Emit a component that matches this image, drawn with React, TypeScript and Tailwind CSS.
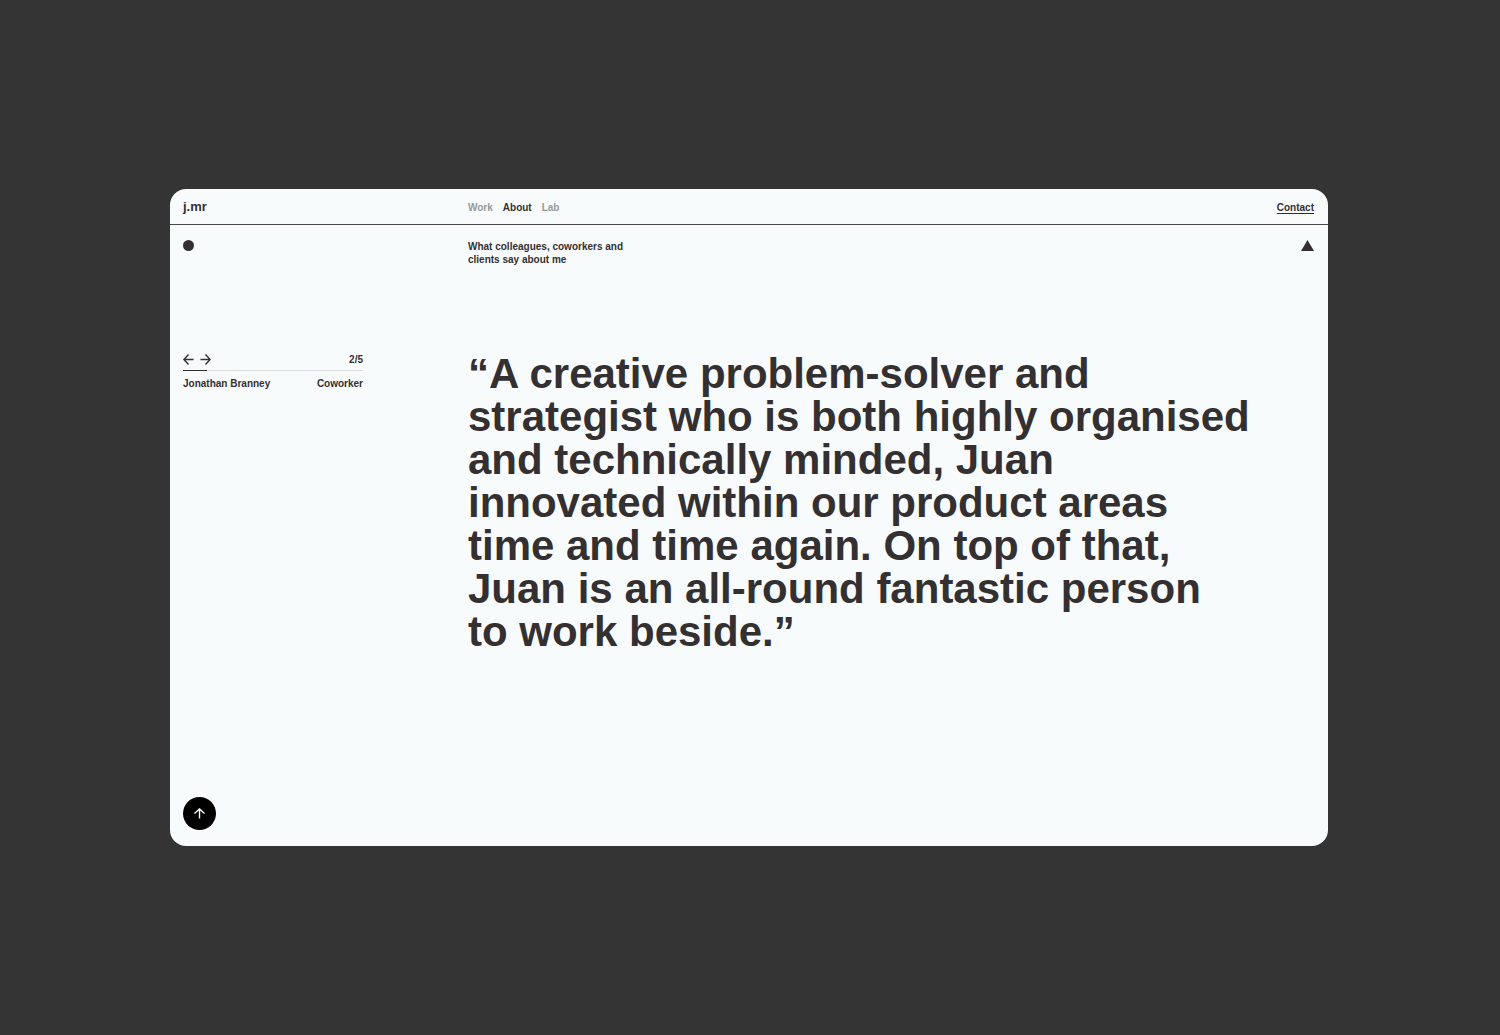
const quote = [
  '“A creative problem-solver and',
  'strategist who is both highly organised',
  'and technically minded, Juan',
  'innovated within our product areas',
  'time and time again. On top of that,',
  'Juan is an all-round fantastic person',
  'to work beside.”',
];

function Arrow({ className }: { className: string }) {
  return (
    <svg viewBox="0 0 12 12" className={className} fill="none" stroke="currentColor" strokeWidth="1.5" aria-hidden="true">
      <path d="M0.5 6H11M6 0.5L11 6L6 11.5" />
    </svg>
  );
}

export default function App() {
  return (
    <div className="flex min-h-screen items-center justify-center bg-[#343434] font-['Liberation_Sans',Arial,sans-serif] text-[10px] leading-[13px] font-bold text-[#343031]">
      <div className="mr-[2px] flex aspect-[1158/657] w-[77.2%] flex-col rounded-2xl bg-[#f8fbfc]">
        <header className="grid h-9 grid-cols-4 items-center gap-2 border-b border-[#4a4748] px-[13px]">
          <a href="#home" className="text-[13px] leading-4">j.mr</a>
          <nav className="flex gap-[10px] pt-px">
            <a href="#work" className="text-[#969899]">Work</a>
            <a href="#about" aria-current="page">About</a>
            <a href="#lab" className="text-[#969899]">Lab</a>
          </nav>
          <a href="#contact" className="col-span-2 mr-px justify-self-end pt-px underline underline-offset-2">Contact</a>
        </header>

        <main className="flex grow flex-col px-[13px] pt-[15px] pb-4">
          <section className="grid grid-cols-4 gap-2">
            <span className="size-[11px] rounded-full bg-[#343031]" />
            <h2 className="w-44">
              What colleagues, coworkers and
              <br />
              clients say about me
            </h2>
            <svg viewBox="0 0 13 11" className="col-span-2 mr-px h-[11px] w-[13px] justify-self-end" fill="currentColor" aria-hidden="true">
              <path d="M6.5 0L13 11H0Z" />
            </svg>
          </section>

          <section className="mt-[86px] grid grid-cols-4 gap-2">
            <div className="w-[180px]">
              <div className="flex h-[18px] items-start justify-between">
                <div className="flex gap-[6px] pt-[2px]">
                  <button type="button" aria-label="Previous quote">
                    <Arrow className="size-[11px] rotate-180" />
                  </button>
                  <button type="button" aria-label="Next quote">
                    <Arrow className="size-[11px]" />
                  </button>
                </div>
                <span className="pt-px">2/5</span>
              </div>
              <div className="h-px bg-[#d9dbdc]">
                <div className="h-px w-6 bg-[#343031]" />
              </div>
              <div className="mt-[6px] flex justify-between">
                <span>Jonathan Branney</span>
                <span>Coworker</span>
              </div>
            </div>
            <blockquote className="col-span-3 text-[42px] leading-[43px] whitespace-nowrap">
              {quote.map((line) => (
                <span key={line} className="block">{line}</span>
              ))}
            </blockquote>
          </section>

          <button type="button" aria-label="Back to top" className="mt-auto flex size-[33px] items-center justify-center rounded-full bg-black text-[#f8fbfc]">
            <Arrow className="size-[11px] -rotate-90" />
          </button>
        </main>
      </div>
    </div>
  );
}
